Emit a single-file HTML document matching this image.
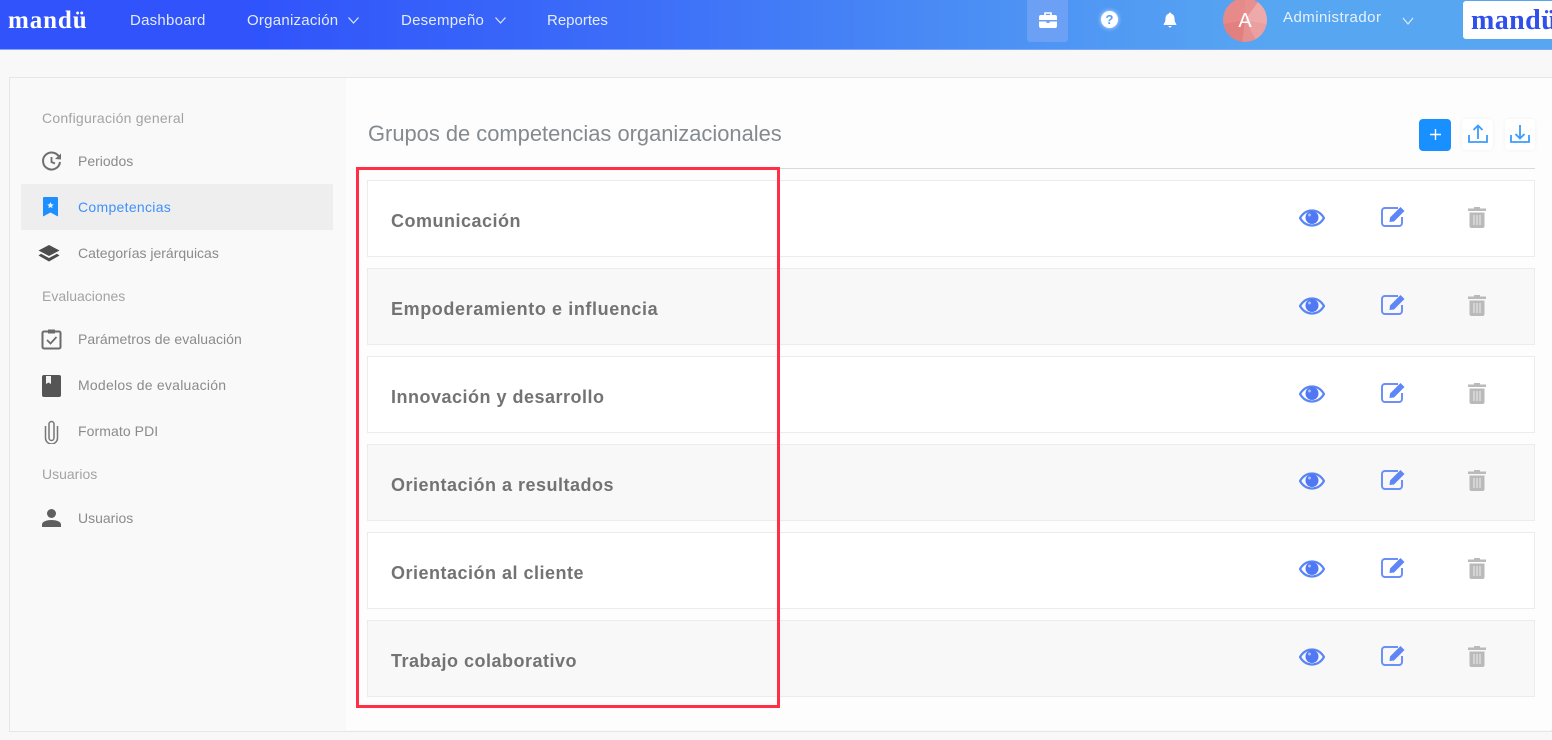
<!DOCTYPE html>
<html lang="es"><head><meta charset="utf-8"><title>Competencias</title>
<style>
*{box-sizing:border-box}
html,body{margin:0;padding:0;width:1552px;height:740px;overflow:hidden;background:#f8f8f8;font-family:"Liberation Sans",sans-serif}
#w{position:absolute;left:0;top:0;width:1552px;height:740px;filter:blur(.35px);overflow:hidden}
.a{position:absolute;white-space:nowrap}
.nav{color:#e3ebfd;font-size:15px;top:12px;line-height:18px;letter-spacing:.25px}
.logo{font-family:"Liberation Serif",serif;font-weight:700}
.sec{position:absolute;white-space:nowrap;color:#a3a3a3;font-size:14px;left:42px;line-height:18px}
.it{position:absolute;white-space:nowrap;color:#8b8b8b;font-size:14px;left:78px;line-height:18px}
.row{position:absolute;left:367px;width:1168px;height:77px;border:1px solid #ececec;background:#fff}
.row.g{background:#f8f8f8}
.row b{position:absolute;left:23px;top:29px;font-size:18px;line-height:22px;color:#737373;letter-spacing:.5px}
.row svg{position:absolute}
.ibtn{position:absolute;top:119px;width:31px;height:31px;border-radius:4px;background:#fff;box-shadow:0 0 3px #f0f0f0}
</style></head><body><div id="w">
<svg width="0" height="0" style="position:absolute"><defs>
<symbol id="eye" viewBox="0 0 26 18"><path d="M1 9C4 4 8 1.500 13 1.500S22 4 25 9c-3 5-7 7.500-12 7.500S4 14 1 9z" fill="none" stroke="#5a86f5" stroke-width="2.200"/><circle cx="13" cy="8.500" r="6.500" fill="#5078f5"/><circle cx="10.500" cy="6" r="1.500" fill="#a9c0fb"/></symbol>
<symbol id="ed" viewBox="0 0 26 22"><path d="M17 3H4a3 3 0 0 0-3 3v12a3 3 0 0 0 3 3h14a3 3 0 0 0 3-3v-6" fill="none" stroke="#6c90f7" stroke-width="2"/><path d="M9 12.500 19.500 2l4 4L13 16.500l-4.500.500z" fill="#5f86f6"/></symbol>
<symbol id="tr" viewBox="0 0 20 22"><path d="M7 2.500V1h6v1.500h6V5H1V2.500zM2.500 6.500h15V20a2 2 0 0 1-2 2h-11a2 2 0 0 1-2-2z" fill="#bababa"/><path d="M7 9v10M10 9v10M13 9v10" stroke="#e6e6e6" stroke-width="1.200"/></symbol>
</defs></svg>

<div class="a" style="left:0;top:0;width:1552px;height:50px;background:linear-gradient(90deg,#3053fb 0,#3053fb 16%,#3d6ff8 42%,#4d93f4 66%,#57a6f2 82%,#57a6f2 100%);border-bottom:1px solid #7ea6fa"></div>
<div class="a logo" style="left:8px;top:8px;font-size:25px;line-height:26px;color:#fff;letter-spacing:.9px">mandü</div>
<div class="a nav" style="left:130px">Dashboard</div>
<div class="a nav" style="left:247px">Organización</div>
<svg class="a" style="left:347px;top:16px" width="13" height="9" viewBox="0 0 13 9"><path d="M1.500 1.500 6.500 7l5-5.500" fill="none" stroke="#dfe8fd" stroke-width="1.200"/></svg>
<div class="a nav" style="left:401px">Desempeño</div>
<svg class="a" style="left:494px;top:16px" width="13" height="9" viewBox="0 0 13 9"><path d="M1.500 1.500 6.500 7l5-5.500" fill="none" stroke="#dfe8fd" stroke-width="1.200"/></svg>
<div class="a nav" style="left:547px;letter-spacing:0">Reportes</div>

<div class="a" style="left:1027px;top:0;width:41px;height:42px;border-radius:0 0 3px 3px;background:#6ba0f4"></div>
<svg class="a" style="left:1039px;top:12px" width="18" height="16" viewBox="0 0 18 16"><path d="M6 3V1h6v2" fill="none" stroke="#fff" stroke-width="1.600"/><path d="M0 5a2 2 0 0 1 2-2h14a2 2 0 0 1 2 2v3H0zM0 9.500h7.500V11h3V9.500H18V14a2 2 0 0 1-2 2H2a2 2 0 0 1-2-2z" fill="#fff"/></svg>
<div class="a" style="left:1101px;top:11px;width:17px;height:17px;border-radius:50%;background:#fff;box-shadow:0 0 4px #d8e9ff;color:#57a0f0;font:700 13px/17px 'Liberation Sans',sans-serif;text-align:center">?</div>
<svg class="a" style="left:1163px;top:12px" width="14" height="16" viewBox="0 0 14 16"><path d="M7 .5c.8 0 1.200.5 1.200 1.200C10.500 2.300 11.500 4 11.500 6.500c0 2.700.7 4 1.800 5.500v1H.7v-1C1.800 10.500 2.500 9.200 2.500 6.500 2.500 4 3.500 2.300 5.800 1.700 5.800 1 6.200.5 7 .5zM5.500 14h3C8.400 15 7.800 15.500 7 15.500S5.600 15 5.500 14z" fill="#fff"/></svg>
<div class="a" style="left:1223px;top:-2px;width:44px;height:44px;border-radius:50%;overflow:hidden;background:conic-gradient(#e88f8f 0 10%,#eeaaaa 10% 28%,#eaa0a0 28% 42%,#e79090 42% 52%,#e27f7f 52% 72%,#e68a8a 72% 100%);color:#fff;font-size:20px;line-height:46px;text-align:center">A</div>
<div class="a" style="left:1283px;top:9px;font-size:15px;line-height:18px;color:#e6f1fd;letter-spacing:.45px">Administrador</div>
<svg class="a" style="left:1401px;top:16px" width="14" height="10" viewBox="0 0 14 10"><path d="M2 2 7 8l5-6" fill="none" stroke="#dcebfd" stroke-width="1.200"/></svg>
<div class="a" style="left:1463px;top:1px;width:89px;height:38px;border-radius:3px 0 0 3px;background:#fff"></div>
<div class="a logo" style="left:1471px;top:6px;font-size:28px;line-height:30px;color:#2f50ec;letter-spacing:.4px">mandü</div>

<div class="a" style="left:9px;top:77px;width:1543px;height:655px;border:1px solid #e6e6e6;background:#f9f9f9"></div>
<div class="a" style="left:346px;top:78px;width:1206px;height:652px;background:#fdfdfd"></div>

<div class="sec" style="top:109px;letter-spacing:.25px">Configuración general</div>
<svg class="a" style="left:41px;top:151px" width="21" height="21" viewBox="0 0 21 21"><path d="M18.500 7A8.500 8.500 0 1 0 19 11" fill="none" stroke="#6f6f6f" stroke-width="2"/><path d="M14 8l6 .500V2.500z" fill="#6f6f6f"/><path d="M10.500 6v5l3.500 1.500" fill="none" stroke="#6f6f6f" stroke-width="1.800"/></svg>
<div class="it" style="top:152px">Periodos</div>
<div class="a" style="left:21px;top:184px;width:312px;height:46px;background:#eeeeee"></div>
<svg class="a" style="left:43px;top:197px" width="15" height="20" viewBox="0 0 15 20"><path d="M1 0h13a1 1 0 0 1 1 1v18.500l-7.500-4-7.500 4V1a1 1 0 0 1 1-1z" fill="#1e8fff"/><path d="M7.500 5l1 2.300 2.300.2-1.800 1.500.6 2.300-2.100-1.300-2.100 1.300.6-2.300-1.800-1.500 2.300-.2z" fill="#e6f2ff"/></svg>
<div class="it" style="top:198px;color:#3f90fb;letter-spacing:.3px">Competencias</div>
<svg class="a" style="left:38px;top:245px" width="22" height="17" viewBox="0 0 22 17"><path d="M11 0l10.500 5.500L11 11 .5 5.500z" fill="#4d4d4d"/><path d="M3 8.800.5 10.500 11 16.500l10.500-6L19 8.800 11 13z" fill="#4d4d4d"/></svg>
<div class="it" style="top:244px">Categorías jerárquicas</div>
<div class="sec" style="top:287px">Evaluaciones</div>
<svg class="a" style="left:41px;top:328px" width="21" height="22" viewBox="0 0 21 22"><rect x="1.500" y="3.500" width="18" height="17" rx="1.500" fill="none" stroke="#6b6b6b" stroke-width="2"/><path d="M7 1.500h7v4H7z" fill="#6b6b6b"/><path d="M6 12l3.500 3.500L15.500 9" fill="none" stroke="#6b6b6b" stroke-width="1.700"/></svg>
<div class="it" style="top:330px;letter-spacing:.05px">Parámetros de evaluación</div>
<svg class="a" style="left:42px;top:375px" width="19" height="22" viewBox="0 0 19 22"><path d="M2 0h15a2 2 0 0 1 2 2v18a2 2 0 0 1-2 2H2a2 2 0 0 1-2-2V2a2 2 0 0 1 2-2z" fill="#555"/><path d="M4 1h5v8L6.500 7.500 4 9z" fill="#f3f3f3"/></svg>
<div class="it" style="top:376px;letter-spacing:.24px">Modelos de evaluación</div>
<svg class="a" style="left:44px;top:420px" width="15" height="24" viewBox="0 0 15 24"><path d="M10 6v12a2.500 2.500 0 0 1-5 0V4a2.500 2.500 0 0 1 5 0v2" fill="none" stroke="#777" stroke-width="1.500"/><path d="M13.500 6v12a6 6 0 0 1-12 0V6" fill="none" stroke="#777" stroke-width="1.500"/></svg>
<div class="it" style="top:422px;letter-spacing:.08px">Formato PDI</div>
<div class="sec" style="top:465px">Usuarios</div>
<svg class="a" style="left:42px;top:509px" width="19" height="18" viewBox="0 0 19 18"><circle cx="9.500" cy="4.500" r="4.500" fill="#5f5f5f"/><path d="M0 18v-2.500C0 12.500 5 11 9.500 11S19 12.500 19 15.500V18z" fill="#5f5f5f"/></svg>
<div class="it" style="top:509px">Usuarios</div>

<div class="a" style="left:368px;top:121px;font-size:21.900px;line-height:26px;color:#848a8f">Grupos de competencias organizacionales</div>
<div class="a" style="left:1419px;top:119px;width:32px;height:32px;border-radius:4px;background:#1890ff"></div>
<svg class="a" style="left:1429px;top:128px" width="13" height="13" viewBox="0 0 13 13"><path d="M6.500 1v11M1 6.500h11" stroke="#fff" stroke-width="1.400"/></svg>
<div class="ibtn" style="left:1462px"></div>
<svg class="a" style="left:1468px;top:122px" width="20" height="24" viewBox="0 0 20 24"><path d="M1 13v7h18v-7" fill="none" stroke="#3b9dfc" stroke-width="1.800"/><path d="M10 17V4M5.500 8 10 3.500 14.500 8" fill="none" stroke="#3b9dfc" stroke-width="1.800"/></svg>
<div class="ibtn" style="left:1505px;width:30px"></div>
<svg class="a" style="left:1510px;top:122px" width="20" height="24" viewBox="0 0 20 24"><path d="M1 13v7h18v-7" fill="none" stroke="#3b9dfc" stroke-width="1.800"/><path d="M10 3v13M5.500 12 10 16.500 14.500 12" fill="none" stroke="#3b9dfc" stroke-width="1.800"/></svg>
<div class="a" style="left:367px;top:168px;width:1168px;height:1px;background:#d9d9d9"></div>

<div class="row" style="top:180px"><b>Comunicación</b><svg style="left:931px;top:28px" width="26" height="18"><use href="#eye"/></svg><svg style="left:1013px;top:24px" width="26" height="22"><use href="#ed"/></svg><svg style="left:1099px;top:25px" width="20" height="22"><use href="#tr"/></svg></div>
<div class="row g" style="top:268px"><b style="letter-spacing:.6px">Empoderamiento e influencia</b><svg style="left:931px;top:28px" width="26" height="18"><use href="#eye"/></svg><svg style="left:1013px;top:24px" width="26" height="22"><use href="#ed"/></svg><svg style="left:1099px;top:25px" width="20" height="22"><use href="#tr"/></svg></div>
<div class="row" style="top:356px"><b>Innovación y desarrollo</b><svg style="left:931px;top:28px" width="26" height="18"><use href="#eye"/></svg><svg style="left:1013px;top:24px" width="26" height="22"><use href="#ed"/></svg><svg style="left:1099px;top:25px" width="20" height="22"><use href="#tr"/></svg></div>
<div class="row g" style="top:444px"><b>Orientación a resultados</b><svg style="left:931px;top:27px" width="26" height="18"><use href="#eye"/></svg><svg style="left:1013px;top:23px" width="26" height="22"><use href="#ed"/></svg><svg style="left:1099px;top:24px" width="20" height="22"><use href="#tr"/></svg></div>
<div class="row" style="top:532px"><b>Orientación al cliente</b><svg style="left:931px;top:27px" width="26" height="18"><use href="#eye"/></svg><svg style="left:1013px;top:23px" width="26" height="22"><use href="#ed"/></svg><svg style="left:1099px;top:24px" width="20" height="22"><use href="#tr"/></svg></div>
<div class="row g" style="top:620px"><b>Trabajo colaborativo</b><svg style="left:931px;top:27px" width="26" height="18"><use href="#eye"/></svg><svg style="left:1013px;top:23px" width="26" height="22"><use href="#ed"/></svg><svg style="left:1099px;top:24px" width="20" height="22"><use href="#tr"/></svg></div>

<div class="a" style="left:356px;top:167px;width:424px;height:541px;border:3px solid #ff2f45"></div>
</div></body></html>
